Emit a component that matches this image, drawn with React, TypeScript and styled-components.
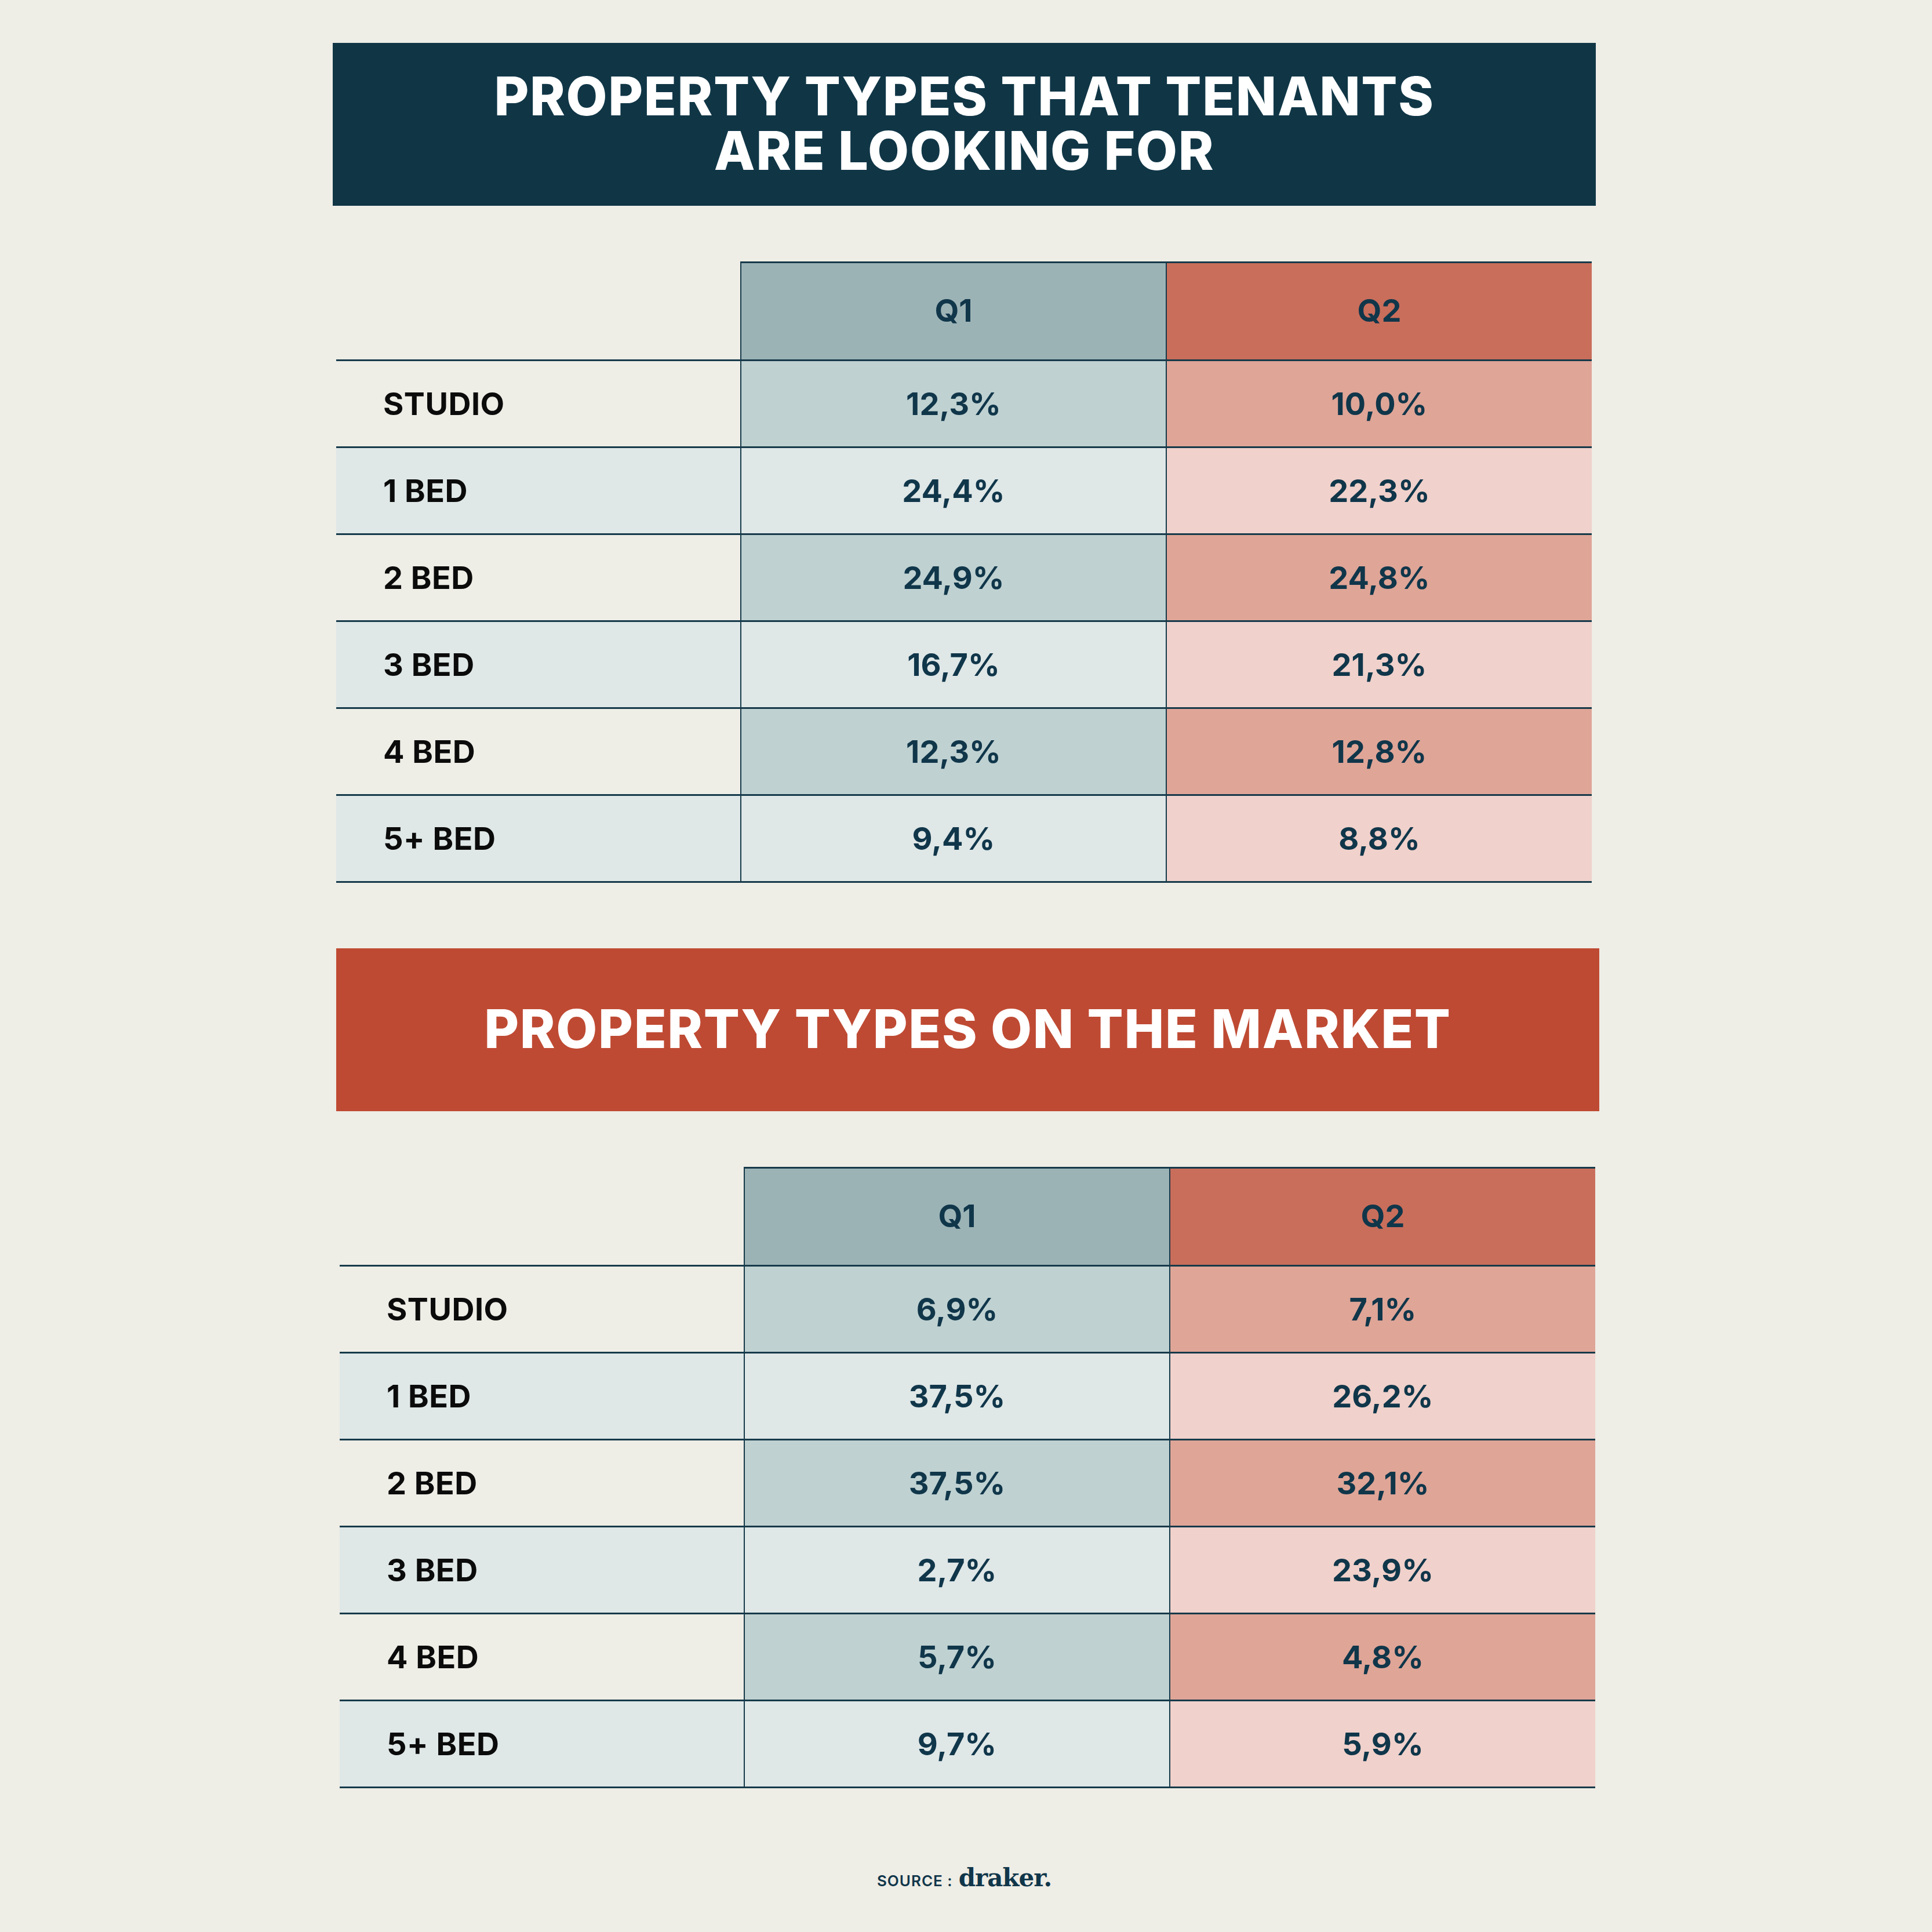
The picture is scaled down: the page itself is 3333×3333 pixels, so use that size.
import styled, { createGlobalStyle } from 'styled-components';

type Row = { label: string; q1: string; q2: string };

const tenants: Row[] = [
	{ label: 'STUDIO', q1: '12,3%', q2: '10,0%' },
	{ label: '1 BED', q1: '24,4%', q2: '22,3%' },
	{ label: '2 BED', q1: '24,9%', q2: '24,8%' },
	{ label: '3 BED', q1: '16,7%', q2: '21,3%' },
	{ label: '4 BED', q1: '12,3%', q2: '12,8%' },
	{ label: '5+ BED', q1: '9,4%', q2: '8,8%' },
];

const market: Row[] = [
	{ label: 'STUDIO', q1: '6,9%', q2: '7,1%' },
	{ label: '1 BED', q1: '37,5%', q2: '26,2%' },
	{ label: '2 BED', q1: '37,5%', q2: '32,1%' },
	{ label: '3 BED', q1: '2,7%', q2: '23,9%' },
	{ label: '4 BED', q1: '5,7%', q2: '4,8%' },
	{ label: '5+ BED', q1: '9,7%', q2: '5,9%' },
];

const navy = '#10364a';
const line = '#163a4a';

const GlobalStyle = createGlobalStyle`
	html, body {
		margin: 0;
		padding: 0;
		background: #eeede6;
	}
	body {
		font-family: Inter, "Noto Sans", sans-serif;
	}
`;

const Page = styled.div`
	width: 3333px;
	height: 3333px;
	background: #eeede6;
	display: flex;
	flex-direction: column;
	padding: 74px 0 0 574px;
	box-sizing: border-box;
`;

const Section = styled.section<{ $shift: number; $top: number }>`
	display: flex;
	flex-direction: column;
	margin-left: ${(p) => p.$shift}px;
	margin-top: ${(p) => p.$top}px;
`;

const Banner = styled.div<{ $bg: string }>`
	width: 2179px;
	height: 281px;
	background: ${(p) => p.$bg};
	color: #ffffff;
	display: flex;
	flex-direction: column;
	align-items: center;
	justify-content: center;
	text-align: center;
	font-weight: 800;
	font-size: 92px;
	letter-spacing: 1.6px;
	padding-bottom: 4px;
	box-sizing: border-box;
`;

const BannerLine = styled.div`
	line-height: 94px;
	height: 94px;
	white-space: nowrap;
`;

const Table = styled.div`
	display: grid;
	grid-template-columns: 697px 734px 735px;
	grid-auto-rows: 150px;
	grid-template-rows: 172px;
	margin: 96px 0 0 6px;
	width: 2166px;
`;

const Blank = styled.div`
	border-bottom: 3px solid ${line};
`;

const HeadCell = styled.div<{ $bg: string }>`
	background: ${(p) => p.$bg};
	border-top: 3px solid ${line};
	border-bottom: 3px solid ${line};
	border-left: 2px solid ${line};
	color: ${navy};
	font-weight: 700;
	font-size: 54px;
	display: flex;
	align-items: center;
	justify-content: center;
	padding-bottom: 4px;
`;

const Label = styled.div<{ $bg: string }>`
	background: ${(p) => p.$bg};
	border-bottom: 3px solid ${line};
	color: #0b0b0b;
	font-weight: 700;
	font-size: 54px;
	letter-spacing: 0.5px;
	display: flex;
	align-items: center;
	padding-left: 81px;
`;

const Value = styled.div<{ $bg: string }>`
	background: ${(p) => p.$bg};
	border-bottom: 3px solid ${line};
	border-left: 2px solid ${line};
	color: ${navy};
	font-weight: 700;
	font-size: 54px;
	display: flex;
	align-items: center;
	justify-content: center;
`;

const Footer = styled.div`
	display: flex;
	align-items: baseline;
	justify-content: center;
	gap: 10px;
	margin-top: 130px;
	width: 2179px;
	color: ${navy};
`;

const SourceText = styled.span`
	font-size: 26px;
	font-weight: 600;
	letter-spacing: 1px;
`;

const Brand = styled.span`
	font-family: "DejaVu Serif", "Liberation Serif", serif;
	font-weight: 700;
	font-size: 42px;
	letter-spacing: -1px;
`;

const odd = { label: '#eeede6', q1: '#bfd1d1', q2: '#dfa597' };
const even = { label: '#dfe7e7', q1: '#dfe7e7', q2: '#f0d1cb' };

function DataTable({ rows }: { rows: Row[] }) {
	return (
		<Table>
			<Blank />
			<HeadCell $bg="#9cb3b6">Q1</HeadCell>
			<HeadCell $bg="#c96e5b">Q2</HeadCell>
			{rows.map((r, i) => {
				const tone = i % 2 === 0 ? odd : even;
				return [
					<Label key={r.label + 'l'} $bg={tone.label}>{r.label}</Label>,
					<Value key={r.label + '1'} $bg={tone.q1}>{r.q1}</Value>,
					<Value key={r.label + '2'} $bg={tone.q2}>{r.q2}</Value>,
				];
			})}
		</Table>
	);
}

export default function App() {
	return (
		<Page>
			<GlobalStyle />
			<Section $shift={0} $top={0}>
				<Banner $bg="#103646">
					<BannerLine>PROPERTY TYPES THAT TENANTS</BannerLine>
					<BannerLine>ARE LOOKING FOR</BannerLine>
				</Banner>
				<DataTable rows={tenants} />
			</Section>
			<Section $shift={6} $top={113}>
				<Banner $bg="#bf4a33">
					<BannerLine>PROPERTY TYPES ON THE MARKET</BannerLine>
				</Banner>
				<DataTable rows={market} />
			</Section>
			<Footer>
				<SourceText>SOURCE :</SourceText>
				<Brand>draker.</Brand>
			</Footer>
		</Page>
	);
}
